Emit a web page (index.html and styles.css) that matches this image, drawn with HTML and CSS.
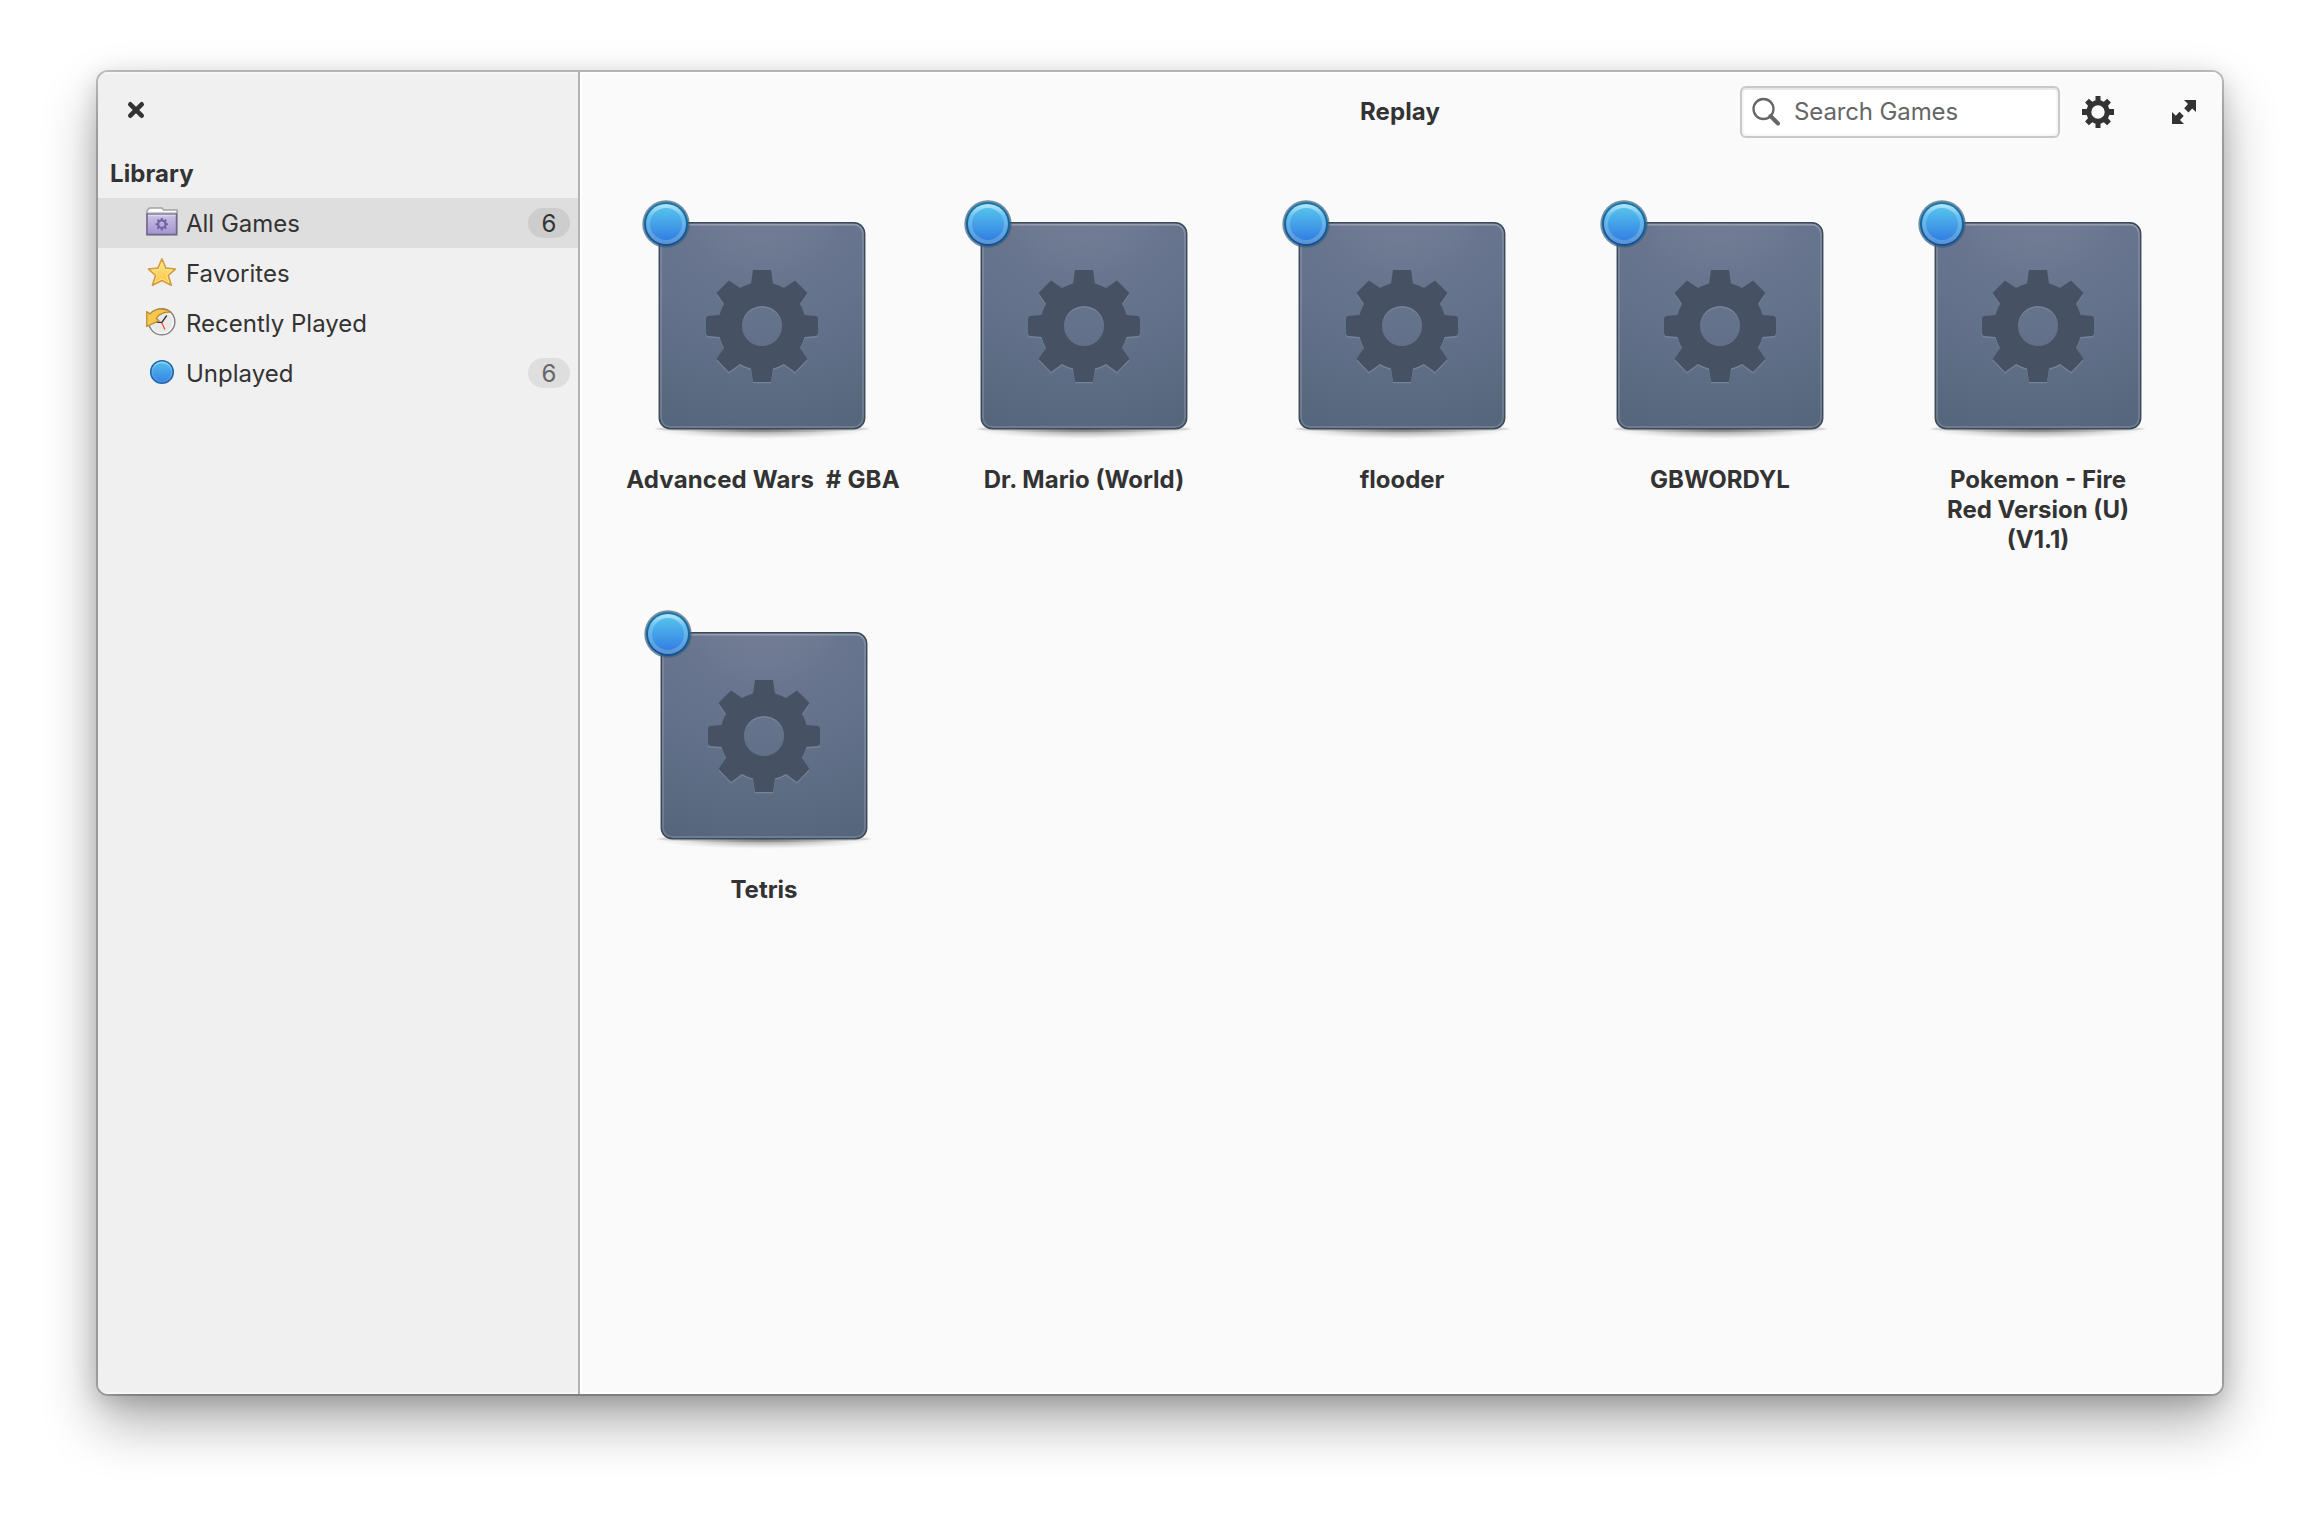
FILE: index.html
```html
<!DOCTYPE html>
<html lang="en">
<head>
<meta charset="utf-8">
<title>Replay</title>
<link rel="stylesheet" href="styles.css">
</head>
<body>
<svg class="defs" aria-hidden="true">
  <defs>
    <radialGradient id="tile" gradientUnits="userSpaceOnUse" cx="128" cy="-20" r="330">
      <stop offset="0" stop-color="#757e97"/><stop offset=".15" stop-color="#717b94"/><stop offset=".28" stop-color="#69758f"/><stop offset=".5" stop-color="#617088"/><stop offset=".8" stop-color="#54657b"/><stop offset="1" stop-color="#52627a"/>
    </radialGradient>
    <linearGradient id="tile-edge" x1="0" y1="0" x2="0" y2="1">
      <stop offset="0" stop-color="#fff" stop-opacity=".28"/><stop offset=".06" stop-color="#fff" stop-opacity=".13"/><stop offset="1" stop-color="#fff" stop-opacity=".14"/>
    </linearGradient>
    <radialGradient id="floor" cx=".5" cy=".5" r=".5">
      <stop offset="0" stop-color="#000" stop-opacity=".45"/><stop offset=".5" stop-color="#000" stop-opacity=".2"/><stop offset=".8" stop-color="#000" stop-opacity=".06"/><stop offset="1" stop-color="#000" stop-opacity="0"/>
    </radialGradient>
    <linearGradient id="dot" x1="0" y1="0" x2="0" y2="1">
      <stop offset="0" stop-color="#55c1ec"/><stop offset="1" stop-color="#3380e4"/>
    </linearGradient>
    <linearGradient id="dot-rim" x1="0" y1="0" x2="0" y2="1">
      <stop offset="0" stop-color="#b5e8fa"/><stop offset=".3" stop-color="#6cc0f0"/><stop offset="1" stop-color="#5a92d6"/>
    </linearGradient>
    <linearGradient id="dot-ring" x1="0" y1="0" x2="0" y2="1">
      <stop offset="0" stop-color="#1878a8"/><stop offset="1" stop-color="#0f4f96"/>
    </linearGradient>
    <linearGradient id="folder" x1="0" y1="0" x2="0" y2="1">
      <stop offset="0" stop-color="#cbc3e6"/><stop offset="1" stop-color="#a494cf"/>
    </linearGradient>
    <linearGradient id="gold" x1="0" y1="0" x2="0" y2="1">
      <stop offset="0" stop-color="#ffe88a"/><stop offset="1" stop-color="#fcc33c"/>
    </linearGradient>
    <symbol id="gear" viewBox="-56 -56 112 112">
      <path fill-rule="evenodd" d="M-9-56H9L11-42.500A44 44 0 0 1 22-38L33-45.500 45.500-33 38-22A44 44 0 0 1 42.500-11L54-10Q56-9.500 56-7V7Q56 9.500 54 10L42.500 11A44 44 0 0 1 38 22L45.500 33 33 46 22 38A44 44 0 0 1 11 42.500L9 56H-9L-11 42.500A44 44 0 0 1-22 38L-33 46-45.500 33-38 22A44 44 0 0 1-42.500 11L-54 10Q-56 9.500-56 7V-7Q-56-9.500-54-10L-42.500-11A44 44 0 0 1-38-22L-45.500-33-33-45.500-22-38A44 44 0 0 1-11-42.500ZM0-20A20 20 0 1 0 0 20 20 20 0 1 0 0-20Z"/>
    </symbol>
    <symbol id="cover" viewBox="0 0 256 256">
      <ellipse cx="128" cy="223" rx="110" ry="10" fill="url(#floor)"/>
      <ellipse cx="128" cy="223" rx="107" ry="3" fill="#000" fill-opacity=".12"/>
      <rect x="25" y="16.500" width="206" height="206.500" rx="11" fill="url(#tile)"/>
      <rect x="27" y="18.500" width="202" height="202.500" rx="9" fill="none" stroke="url(#tile-edge)" stroke-width="2"/>
      <rect x="25.300" y="16.800" width="205.400" height="206" rx="11" fill="none" stroke="#3c4a5a" stroke-width="1.500"/>
      <use href="#gear" x="72" y="65.500" width="112" height="112" fill="#76839a"/>
      <use href="#gear" x="72" y="64" width="112" height="112" fill="#465263"/>
    </symbol>
    <symbol id="unplayed" viewBox="0 0 48 48">
      <circle cx="24" cy="24" r="23.700" fill="#3a5f7a" fill-opacity=".7"/>
      <circle cx="24" cy="24" r="22" fill="url(#dot-ring)"/>
      <circle cx="24" cy="24" r="20" fill="url(#dot-rim)"/>
      <circle cx="24" cy="24" r="16" fill="url(#dot)"/>
    </symbol>
  </defs>
</svg>

<main class="window">
  <aside class="sidebar">
    <header class="sidebar-header">
      <button class="icon-button" aria-label="Close">
        <svg class="close-icon" viewBox="0 0 16 16"><path d="M2.300 2.300 13.700 13.700M13.700 2.300 2.300 13.700" stroke="#333" stroke-width="4.600" fill="none" stroke-linecap="round"/></svg>
      </button>
    </header>
    <h2 class="section-title">Library</h2>
    <ul class="source-list">
      <li class="source selected">
        <svg class="source-icon" viewBox="0 0 32 32">
          <path d="M1 28V3.500L3.500 1H16l1.500 2H31V28Z" fill="#fff" stroke="#a3a3a3" stroke-width="1.600"/>
          <rect x="1" y="7" width="29.500" height="20.500" fill="url(#folder)" stroke="#6f668c" stroke-width="1.500"/>
          <path d="M2 6.200H30" stroke="#999" stroke-width="1.400"/><path d="M2 8.500H29.500" stroke="#dcd6f0" stroke-width="1.400"/>
          <g stroke="#7263a6" fill="none"><circle cx="15.800" cy="17.200" r="3.700" stroke-width="2.200"/><path d="M15.800 11v3M15.800 20.400v3M9.600 17.200h3M19 17.200h3M11.400 12.800l2 2M18.200 19.600l2 2M11.400 21.600l2-2M18.200 14.800l2-2" stroke-width="2"/></g>
        </svg>
        <span class="source-name">All Games</span><span class="count">6</span>
      </li>
      <li class="source">
        <svg class="source-icon" viewBox="0 0 32 32">
          <path d="M15.900 2 19.800 11.200 29.300 12 22.200 18.400 25.300 28.300 15.900 23.400 6.500 28.300 9.600 18.400 2.500 12 12 11.200Z" fill="url(#gold)" stroke="#d59a3c" stroke-width="1.700" stroke-linejoin="round"/>
          <path d="M15.900 5.200 18.800 12.500 26.300 13.200 20.700 18.200 23 25.600 15.900 21.800 8.800 25.600 11.100 18.200 5.500 13.200 13 12.500Z" fill="none" stroke="#ffe590" stroke-width="1"/>
        </svg>
        <span class="source-name">Favorites</span>
      </li>
      <li class="source">
        <svg class="source-icon" viewBox="0 0 32 32">
          <circle cx="15.800" cy="14.800" r="13" fill="#e9e9e9" stroke="#858585" stroke-width="1.600"/>
          <circle cx="15.800" cy="14.800" r="11.600" fill="none" stroke="#fafafa" stroke-width="1.200"/>
          <path d="M10.500 15.200 15.800 15.500 20.800 8.500" fill="none" stroke="#333" stroke-width="1.300"/>
          <path d="M15.800 15.500 18.800 22.500" stroke="#f0553c" stroke-width="1.300"/>
          <path d="M.8 4.500 4 7C8.500 1.500 18 .2 25.200 5.400 19 4.200 12.500 7.200 10.200 11.500L13 13.600.8 19.500Z" fill="#f7c850" stroke="#b98a2c" stroke-width="1.300" stroke-linejoin="round"/>
        </svg>
        <span class="source-name">Recently Played</span>
      </li>
      <li class="source">
        <svg class="source-icon" viewBox="0 0 32 32">
          <circle cx="16" cy="15" r="11.300" fill="url(#dot)" stroke="#1d67a8" stroke-width="1.500"/>
          <circle cx="16" cy="15" r="9.700" fill="none" stroke="url(#dot-rim)" stroke-opacity=".6" stroke-width="1.500"/>
        </svg>
        <span class="source-name">Unplayed</span><span class="count">6</span>
      </li>
    </ul>
  </aside>

  <section class="content">
    <header class="header">
      <h1 class="title">Replay</h1>
      <label class="search">
        <svg class="search-icon" viewBox="0 0 32 32"><circle cx="12.500" cy="13" r="10" fill="none" stroke="#666" stroke-width="2.300"/><path d="M19.500 20 27 27.500" stroke="#666" stroke-width="4" stroke-linecap="round"/></svg>
        <span class="placeholder">Search Games</span>
      </label>
      <button class="icon-button" aria-label="Settings">
        <svg class="menu-icon" viewBox="0 0 32 32"><path fill="#333" fill-rule="evenodd" d="M13.500 0h5v4.300l3.300 1.400 3.300-3 3.800 3.700-2.900 3.400 1.300 3.300H32v5.800h-4.700L26 22.200l2.900 3.400-3.800 3.700-3.300-3-3.300 1.400V32h-5v-4.300l-3.300-1.400-3.300 3-3.800-3.700L6 22.200 4.700 18.900H0v-5.800h4.700L6 9.800 3.100 6.400l3.800-3.700 3.300 3 3.300-1.400ZM16 9.300a6.700 6.700 0 1 0 0 13.400 6.700 6.700 0 1 0 0-13.400Z"/></svg>
      </button>
      <button class="icon-button" aria-label="Maximize">
        <svg class="expand-icon" viewBox="0 0 24 24"><path fill="#333" d="M12 0H24V12L20.200 8.500 16.500 12.500 12.200 8.300 16 4ZM12 24H0V12L3.800 15.700 7.500 11.700 11.700 15.900 8 20Z"/></svg>
      </button>
    </header>
    <div class="games">
      <article class="game"><div class="art nudge"><svg class="cover"><use href="#cover"/></svg><svg class="badge"><use href="#unplayed"/></svg></div><h3 class="name wide">Advanced Wars&nbsp; # GBA</h3></article>
      <article class="game"><div class="art"><svg class="cover"><use href="#cover"/></svg><svg class="badge"><use href="#unplayed"/></svg></div><h3 class="name">Dr. Mario (World)</h3></article>
      <article class="game"><div class="art"><svg class="cover"><use href="#cover"/></svg><svg class="badge"><use href="#unplayed"/></svg></div><h3 class="name">flooder</h3></article>
      <article class="game"><div class="art"><svg class="cover"><use href="#cover"/></svg><svg class="badge"><use href="#unplayed"/></svg></div><h3 class="name">GBWORDYL</h3></article>
      <article class="game"><div class="art"><svg class="cover"><use href="#cover"/></svg><svg class="badge"><use href="#unplayed"/></svg></div><h3 class="name">Pokemon - Fire<br>Red Version (U)<br>(V1.1)</h3></article>
      <article class="game"><div class="art"><svg class="cover"><use href="#cover"/></svg><svg class="badge"><use href="#unplayed"/></svg></div><h3 class="name">Tetris</h3></article>
    </div>
  </section>
</main>
</body>
</html>
```
FILE: styles.css
```css
* { box-sizing: border-box; }

body {
  margin: 0;
  height: 1518px;
  padding: 72px 98px 124px;
  background: #fff;
  color: #333;
  font: 400 24px/30px Inter, "Liberation Sans", sans-serif;
  overflow: hidden;
}

h1, h2, h3, ul { margin: 0; padding: 0; font-size: inherit; }

.defs { display: block; width: 0; height: 0; }

.window {
  display: flex;
  width: 2124px;
  height: 1322px;
  border-radius: 10px;
  overflow: hidden;
  box-shadow: 0 0 0 2px rgba(0, 0, 0, .22), 0 28px 56px rgba(0, 0, 0, .33), 0 6px 24px rgba(0, 0, 0, .18);
}

.sidebar {
  width: 482px;
  border-right: 2px solid #b3b3b3;
  background: #f0f0f0;
  box-shadow: inset 0 2px #f8f8f8, inset 0 -2px #f6f6f6;
}

.sidebar-header { display: flex; height: 84px; padding: 30px; }

.icon-button {
  display: flex;
  padding: 0;
  border: 0;
  background: none;
}

.close-icon { width: 16px; height: 16px; overflow: visible; }

.section-title {
  height: 42px;
  padding-left: 12px;
  line-height: 35px;
  font-weight: 700;
  letter-spacing: .1px;
}

.source-list { list-style: none; }

.source {
  display: flex;
  align-items: center;
  gap: 8px;
  height: 50px;
  padding: 0 8px 0 48px;
}

.selected { background: #dedede; }

.source-icon { width: 32px; height: 32px; flex: none; }

.source-name { flex: 1; padding-top: 2px; }

.count {
  width: 42px;
  height: 30px;
  border-radius: 15px;
  background: #dedede;
  color: #666;
  line-height: 32px;
  text-align: center;
}

.selected .count { background: #cdcdcd; color: #333; }

.content {
  flex: 1;
  background: #fafafa;
  box-shadow: inset 2px 2px #fff, inset 0 -2px #fff;
}

.header {
  display: flex;
  align-items: center;
  height: 80px;
  padding: 0 26px 0 780px;
}

.title { flex: 1; font-weight: 700; letter-spacing: .1px; }

.search {
  display: flex;
  align-items: center;
  gap: 11px;
  width: 320px;
  height: 52px;
  margin-right: 22px;
  padding-left: 9px;
  border: 2px solid #c8c8c8;
  border-radius: 6px;
  background: #fff;
  color: #666;
  box-shadow: inset 0 2px #e8e8e8, inset 0 0 0 2px #f6f6f6;
}

.search-icon { width: 32px; height: 32px; }

.placeholder { letter-spacing: -.12px; }

.menu-icon { width: 32px; height: 32px; margin-right: 58px; }

.expand-icon { width: 24px; height: 24px; }

.games {
  display: grid;
  grid-template-columns: 322px repeat(4, 318px);
  grid-auto-rows: 410px;
  padding: 54px 0 0 23px;
}

.game { display: flex; flex-direction: column; align-items: center; }

.art { position: relative; width: 256px; height: 256px; }

.nudge { margin-right: 4px; }

.cover { display: block; width: 256px; height: 256px; }

.badge { position: absolute; left: 8px; top: -6px; width: 48px; height: 48px; }

.name { padding-top: 3px; font-weight: 700; text-align: center; }

.wide { margin-right: 2px; letter-spacing: .17px; }
```
